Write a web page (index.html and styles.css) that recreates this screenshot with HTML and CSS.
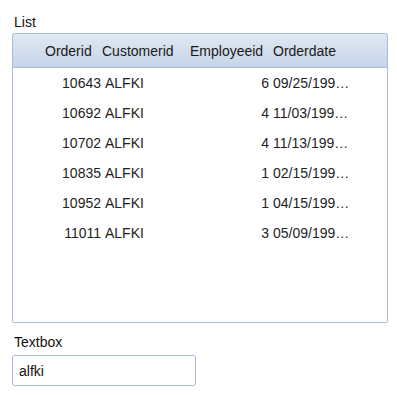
FILE: index.html
```html
<!DOCTYPE html>
<html lang="en">
<head>
  <meta charset="UTF-8" />
  <title>List</title>
  <link rel="stylesheet" href="styles.css">
</head>
<body>
  <div class="label">List</div>
  <div class="list">
    <div class="list-head">
      <span class="h1">Orderid</span>
      <span class="h2">Customerid</span>
      <span class="h3">Employeeid</span>
      <span class="h4">Orderdate</span>
    </div>
    <div class="row">
      <span class="c1">10643</span><span class="c2">ALFKI</span><span class="c3">6</span><span class="c4">09/25/199…</span>
    </div>
    <div class="row">
      <span class="c1">10692</span><span class="c2">ALFKI</span><span class="c3">4</span><span class="c4">11/03/199…</span>
    </div>
    <div class="row">
      <span class="c1">10702</span><span class="c2">ALFKI</span><span class="c3">4</span><span class="c4">11/13/199…</span>
    </div>
    <div class="row">
      <span class="c1">10835</span><span class="c2">ALFKI</span><span class="c3">1</span><span class="c4">02/15/199…</span>
    </div>
    <div class="row">
      <span class="c1">10952</span><span class="c2">ALFKI</span><span class="c3">1</span><span class="c4">04/15/199…</span>
    </div>
    <div class="row">
      <span class="c1">11011</span><span class="c2">ALFKI</span><span class="c3">3</span><span class="c4">05/09/199…</span>
    </div>
  </div>

  <div class="label label-text">Textbox</div>
  <input class="textbox" type="text" value="alfki" />
</body>
</html>
```

FILE: styles.css
```css
body {
  margin: 0;
  padding: 14px 10px 0 12px;
  font-family: "Liberation Sans", Arial, sans-serif;
  font-size: 14px;
  line-height: 16px;
  color: #1e1e1e;
  background: #fff;
}
.label {
  padding-left: 2px;
  color: #111;
}
.list {
  margin-top: 3px;
  width: 376px;
  height: 290px;
  box-sizing: border-box;
  border: 1px solid #a7bcda;
  border-radius: 2px;
  overflow: hidden;
}
.list-head {
  display: flex;
  align-items: center;
  height: 33px;
  padding-left: 32px;
  border-bottom: 1px solid #a9bcd8;
  background: linear-gradient(#e1e8f3, #c6d4e8);
  white-space: nowrap;
  color: #1a1a1a;
}
.h1 { width: 57px; }
.h2 { width: 88px; }
.h3 { width: 83px; }
.row {
  display: flex;
  align-items: center;
  height: 30px;
  white-space: nowrap;
}
.c1 {
  width: 88px;
  text-align: right;
}
.c2 {
  width: 80px;
  margin-left: 4px;
}
.c3 {
  width: 84px;
  text-align: right;
}
.c4 {
  margin-left: 4px;
}
.label-text {
  margin-top: 11px;
}
.textbox {
  display: block;
  margin-top: 5px;
  width: 184px;
  height: 31px;
  box-sizing: border-box;
  padding: 0 6px;
  border: 1px solid #a7bcda;
  border-radius: 3px;
  font-family: "Liberation Sans", Arial, sans-serif;
  font-size: 14px;
  color: #111;
  outline: none;
}
```
